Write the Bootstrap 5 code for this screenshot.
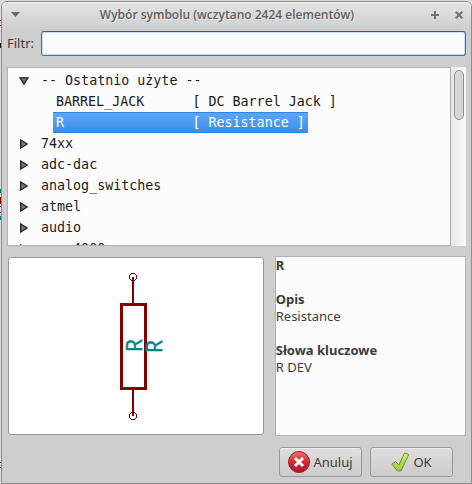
<!DOCTYPE html>
<html lang="pl">
<head>
<meta charset="utf-8">
<meta name="viewport" content="width=device-width, initial-scale=1">
<title>Wybór symbolu</title>
<link rel="stylesheet" href="https://cdn.jsdelivr.net/npm/bootstrap@5.3.0/dist/css/bootstrap.min.css">
<style>
  body {
    font: 13px/17px "Noto Sans", sans-serif;
    color: #3c3c3c;
    padding: 1px 0 0 1px;
    /* edge of the schematic editor behind the dialog */
    background: linear-gradient(
      #dcdcdc 20px, #840000 20px 21px, #dcdcdc 21px 25px, #840000 25px 26px, #dcdcdc 26px 43px,
      #111 43px 48px, #dcdcdc 48px 189px, #008484 189px 193px, #dcdcdc 193px 197px,
      #840000 197px 204px, #dcdcdc 204px 206px, #840000 206px 207px, #dcdcdc 207px 212px,
      #840000 212px 213px, #dcdcdc 213px 216px, #008484 216px 220px, #dcdcdc 220px 462px,
      #840000 462px 463px, #dcdcdc 463px 467px, #840000 467px 468px, #dcdcdc 468px);
  }
  .dialog {
    min-height: calc(100vh - 1px);
    background: #cecece;
    border: 1px solid #8c8c8c;
    border-radius: 6px 6px 0 0;
    padding: 0 5px 5px;
  }
  .titlebar {
    height: 28px;
    margin: 0 -5px;
    padding: 0 0 3px 9px;
    border-radius: 5px 5px 0 0;
    background: linear-gradient(#e4e4e4, #cecece);
    box-shadow: inset 0 1px #f2f2f2;
  }
  .titlebar h1 { font-family: "Open Sans", "Noto Sans", sans-serif; font-size: 12px; font-weight: 600; line-height: 17px; color: #606060; text-shadow: 1px 1px #e8e8e8; }
  .titlebar button { width: 24px; height: 24px; }
  .titlebar .window-menu { width: 20px; }
  .filter-row { height: 27px; gap: 7px; }
  .filter-row input {
    height: 25px; padding: 0 4px;
    font-size: 13px;
    background: #fcfcfc;
    border: 1px solid #3b74b4; border-top-color: #35618f; border-radius: 3px;
    box-shadow: inset 0 0 0 1px #c3dcf5;
  }
  .tree-area { height: 179px; margin-top: 10px; }
  .tree {
    background: #fcfcfc;
    border: 1px solid #b0b0b0;
    padding-top: 2px;
    color: #1a1a1a;
    font-family: "DejaVu Sans Mono", monospace;
    font-size: 10pt; line-height: 21px;
    white-space: pre;
  }
  .tree ul { padding-left: 45px; }
  .tree summary { list-style: none; height: 21px; padding-left: 12px; gap: 13px; }
  .tree summary svg { width: 8px; height: 10px; }
  .tree details[open] summary svg { width: 10px; height: 8px; margin: 0 -1px; }
  .tree li span { display: inline-block; height: 21px; padding: 0 3px; vertical-align: top; }
  .tree li .chosen {
    color: #fff;
    background: linear-gradient(#5ba7fb, #3e8ee6);
    border: solid #2f84e0; border-width: 1px 0;
    line-height: 19px;
  }
  .scroll-track { width: 15px; padding: 3px 2px; background: linear-gradient(90deg, #e6e6e6, #fafafa); }
  .scroll-thumb { height: 50px; width: 10px; margin-left: 1px; background: linear-gradient(90deg, #dadada, #d2d2d2); border: 1px solid #929292; border-radius: 5px; }
  .lower { margin-top: 10px; gap: 11px; height: 180px; }
  .preview { flex: 254 0 0; margin: 1px 0 1px 1px; padding-right: 2px; background: #fff; border: 1px solid #999; border-radius: 3px; }
  .preview text { font: 21px "Noto Sans", sans-serif; }
  .info { flex: 191 0 0; background: #fcfcfc; border: 1px solid #b0b0b0; }
  .info dt { font-weight: 700; }
  .info dd { margin: 0 0 17px; min-height: 0; }
  .actions { gap: 8px; margin-top: 11px; padding-right: 13px; }
  .actions .btn {
    width: 83px; height: 30px; padding: 0; gap: 3px;
    font-size: 13px; line-height: 17px; color: #3c3c3c;
    background: linear-gradient(#dfdfdf, #cbcbcb);
    border: 1px solid #999; border-radius: 3px;
    box-shadow: inset 0 1px #ececec;
  }
</style>
<script src="https://cdn.jsdelivr.net/npm/bootstrap@5.3.0/dist/js/bootstrap.bundle.min.js"></script>
</head>
<body>
<svg class="d-none">
  <symbol id="closed" viewBox="0 0 8 10"><path d="M.7 1v8L7.300 5z" fill="#777" stroke="#222" stroke-width="1.300"/></symbol>
  <symbol id="opened" viewBox="0 0 10 8"><path d="M1 .8h8L5 7.200z" fill="#777" stroke="#222" stroke-width="1.300"/></symbol>
</svg>
<main class="dialog">
  <header class="titlebar d-flex align-items-center">
    <button class="window-menu btn p-0 border-0 d-flex align-items-center" aria-label="Menu okna">
      <svg width="9" height="5"><path d="M0 0h9L4.500 5z" fill="#666"/></svg>
    </button>
    <h1 class="flex-fill text-center m-0">Wybór symbolu (wczytano 2424 elementów)</h1>
    <button class="btn p-0 border-0 d-flex align-items-center justify-content-center" aria-label="Maksymalizuj">
      <svg width="8" height="8"><path d="M4 0v8M0 4h8" stroke="#737373" stroke-width="2"/></svg>
    </button>
    <button class="btn p-0 border-0 d-flex align-items-center justify-content-center" aria-label="Zamknij">
      <svg width="8" height="8"><path d="M.7.7l6.600 6.600M7.300.7L.7 7.300" stroke="#737373" stroke-width="2"/></svg>
    </button>
  </header>
  <div class="filter-row d-flex align-items-center">
    <label for="filter">Filtr:</label>
    <input id="filter" type="text" class="form-control flex-fill">
  </div>
  <div class="tree-area d-flex">
    <div class="tree flex-fill overflow-hidden"><details open><summary class="d-flex align-items-center"><svg><use href="#opened"/></svg>-- Ostatnio użyte --</summary><ul class="list-unstyled mb-0"><li><span>BARREL_JACK      [ DC Barrel Jack ]</span></li><li><span class="chosen">R                [ Resistance ]</span></li></ul></details><details><summary class="d-flex align-items-center"><svg><use href="#closed"/></svg>74xx</summary></details><details><summary class="d-flex align-items-center"><svg><use href="#closed"/></svg>adc-dac</summary></details><details><summary class="d-flex align-items-center"><svg><use href="#closed"/></svg>analog_switches</summary></details><details><summary class="d-flex align-items-center"><svg><use href="#closed"/></svg>atmel</summary></details><details><summary class="d-flex align-items-center"><svg><use href="#closed"/></svg>audio</summary></details><details><summary class="d-flex align-items-center"><svg><use href="#closed"/></svg>cmos4000</summary></details></div>
    <div class="scroll-track"><div class="scroll-thumb"></div></div>
  </div>
  <div class="lower d-flex">
    <div class="preview d-flex align-items-center justify-content-center">
      <svg width="50" height="150" viewBox="110 271 50 150" overflow="visible" fill="none" stroke="#840000">
        <g shape-rendering="crispEdges">
          <path d="M133 277v27M133 389v27" stroke-width="2"/>
          <rect x="121.500" y="304.500" width="24" height="84" stroke-width="3"/>
          <circle cx="133" cy="277" r="3.500"/><circle cx="133" cy="416" r="3.500"/>
        </g>
        <g fill="#008484" stroke="#008484" stroke-width=".4">
          <text transform="translate(142 352) rotate(-90)">R</text>
          <text transform="translate(162 353) rotate(-90)">R</text>
        </g>
      </svg>
    </div>
    <dl class="info mb-0">
      <dt>R</dt><dd></dd>
      <dt>Opis</dt><dd>Resistance</dd>
      <dt>Słowa kluczowe</dt><dd>R DEV</dd>
    </dl>
  </div>
  <div class="actions d-flex justify-content-end">
    <button class="btn d-flex align-items-center justify-content-center" type="button">
      <svg width="22" height="22" viewBox="0 0 22 22"><defs><linearGradient id="red" x2="0" y2="1"><stop stop-color="#ec7770"/><stop offset=".5" stop-color="#d22a2e"/><stop offset="1" stop-color="#b01430"/></linearGradient></defs><circle cx="11" cy="11" r="10.500" fill="url(#red)" stroke="#a51c28"/><path d="M7 7l8 8M15 7l-8 8" stroke="#fff" stroke-width="3"/></svg>
      Anuluj</button>
    <button class="btn d-flex align-items-center justify-content-center" type="button">
      <svg width="19" height="20" viewBox="0 0 19 20"><defs><linearGradient id="green" x2="0" y2="1"><stop stop-color="#dcea7c"/><stop offset="1" stop-color="#9cc534"/></linearGradient></defs><path d="M.8 12L4.500 9.500l3.500 3.500L13.500 1l4.300 1.500L10 19H6.500z" fill="url(#green)" stroke="#5f9a3c" stroke-linejoin="round"/></svg>
      OK</button>
  </div>
</main>
</body>
</html>
